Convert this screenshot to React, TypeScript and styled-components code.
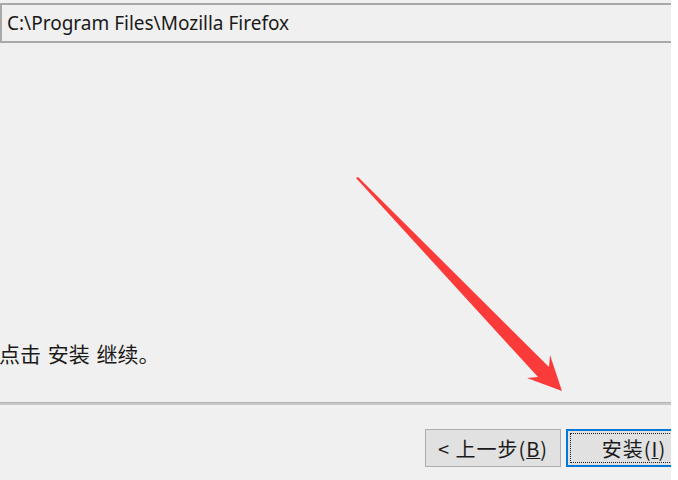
import React from "react";
import styled, {createGlobalStyle} from "styled-components";

const GlobalStyle = createGlobalStyle`
  html, body {
    margin: 0;
    padding: 0;
    background: #ffffff;
  }
  body {
    font-family: "Noto Sans", "Noto Sans CJK SC", sans-serif;
  }
`

const Arrow = () => (
	<ArrowSvg width="678" height="480" viewBox="0 0 678 480">
		<polygon
			points="356,178 358,177 549,367 550,355 562,391 527,378 538,377"
			fill="#fb3a3a"
		/>
	</ArrowSvg>
)

export default function App() {
	return (
		<>
			<GlobalStyle/>
			<Page>
				<Window>
					<PathField>C:\Program Files\Mozilla Firefox</PathField>
					<Body>
						<Hint>点击 安装 继续。</Hint>
					</Body>
					<Separator/>
					<ButtonRow>
						<Button>&lt; 上一步(<u>B</u>)</Button>
						<Button primary>安装(<u>I</u>)</Button>
					</ButtonRow>
				</Window>
				<Arrow/>
			</Page>
		</>
	)
}

const Page = styled.div`
  position: relative;
  width: 678px;
  height: 480px;
  background: #ffffff;
  overflow: hidden;
`
const Window = styled.div`
  width: 671px;
  height: 480px;
  background: #f0f0f0;
  display: flex;
  flex-direction: column;
  overflow: hidden;
`
const PathField = styled.div`
  box-sizing: border-box;
  margin: 3px -20px 0 0;
  height: 40px;
  border: 2px solid #a9a9a9;
  padding: 0 0 0 5px;
  display: flex;
  align-items: center;
  font-size: 19px;
  color: #1a1a1a;
  background: #f0f0f0;
`
const Body = styled.div`
  flex: 1;
  display: flex;
  align-items: flex-end;
  padding-bottom: 34px;
`
const Hint = styled.div`
  font-family: "Noto Sans CJK SC", sans-serif;
  font-size: 21px;
  word-spacing: 2px;
  color: #1a1a1a;
  margin-left: -1px;
`
const Separator = styled.div`
  height: 2px;
  background: #c8c8c8;
  border-top: 1px solid #b4b4b4;
`
const ButtonRow = styled.div`
  display: flex;
  gap: 5px;
  padding: 24px 0 0 425px;
  height: 51px;
`
const Button = styled.div<{ primary?: boolean }>`
  box-sizing: border-box;
  flex: 0 0 136px;
  height: 38px;
  display: flex;
  align-items: center;
  justify-content: center;
  font-family: "Noto Sans CJK SC", sans-serif;
  font-size: 20px;
  letter-spacing: 1px;
  color: #1a1a1a;
  background: #e1e1e1;
  border: ${p => p.primary ? "2px solid #0078d7" : "1px solid #adadad"};
  position: relative;

  &::after {
    content: "";
    display: ${p => p.primary ? "block" : "none"};
    position: absolute;
    inset: 2px;
    border: 1px dotted #202020;
  }

  u {
    text-decoration-thickness: 1px;
  }
`
const ArrowSvg = styled.svg`
  position: absolute;
  left: 0;
  top: 0;
  pointer-events: none;
`
